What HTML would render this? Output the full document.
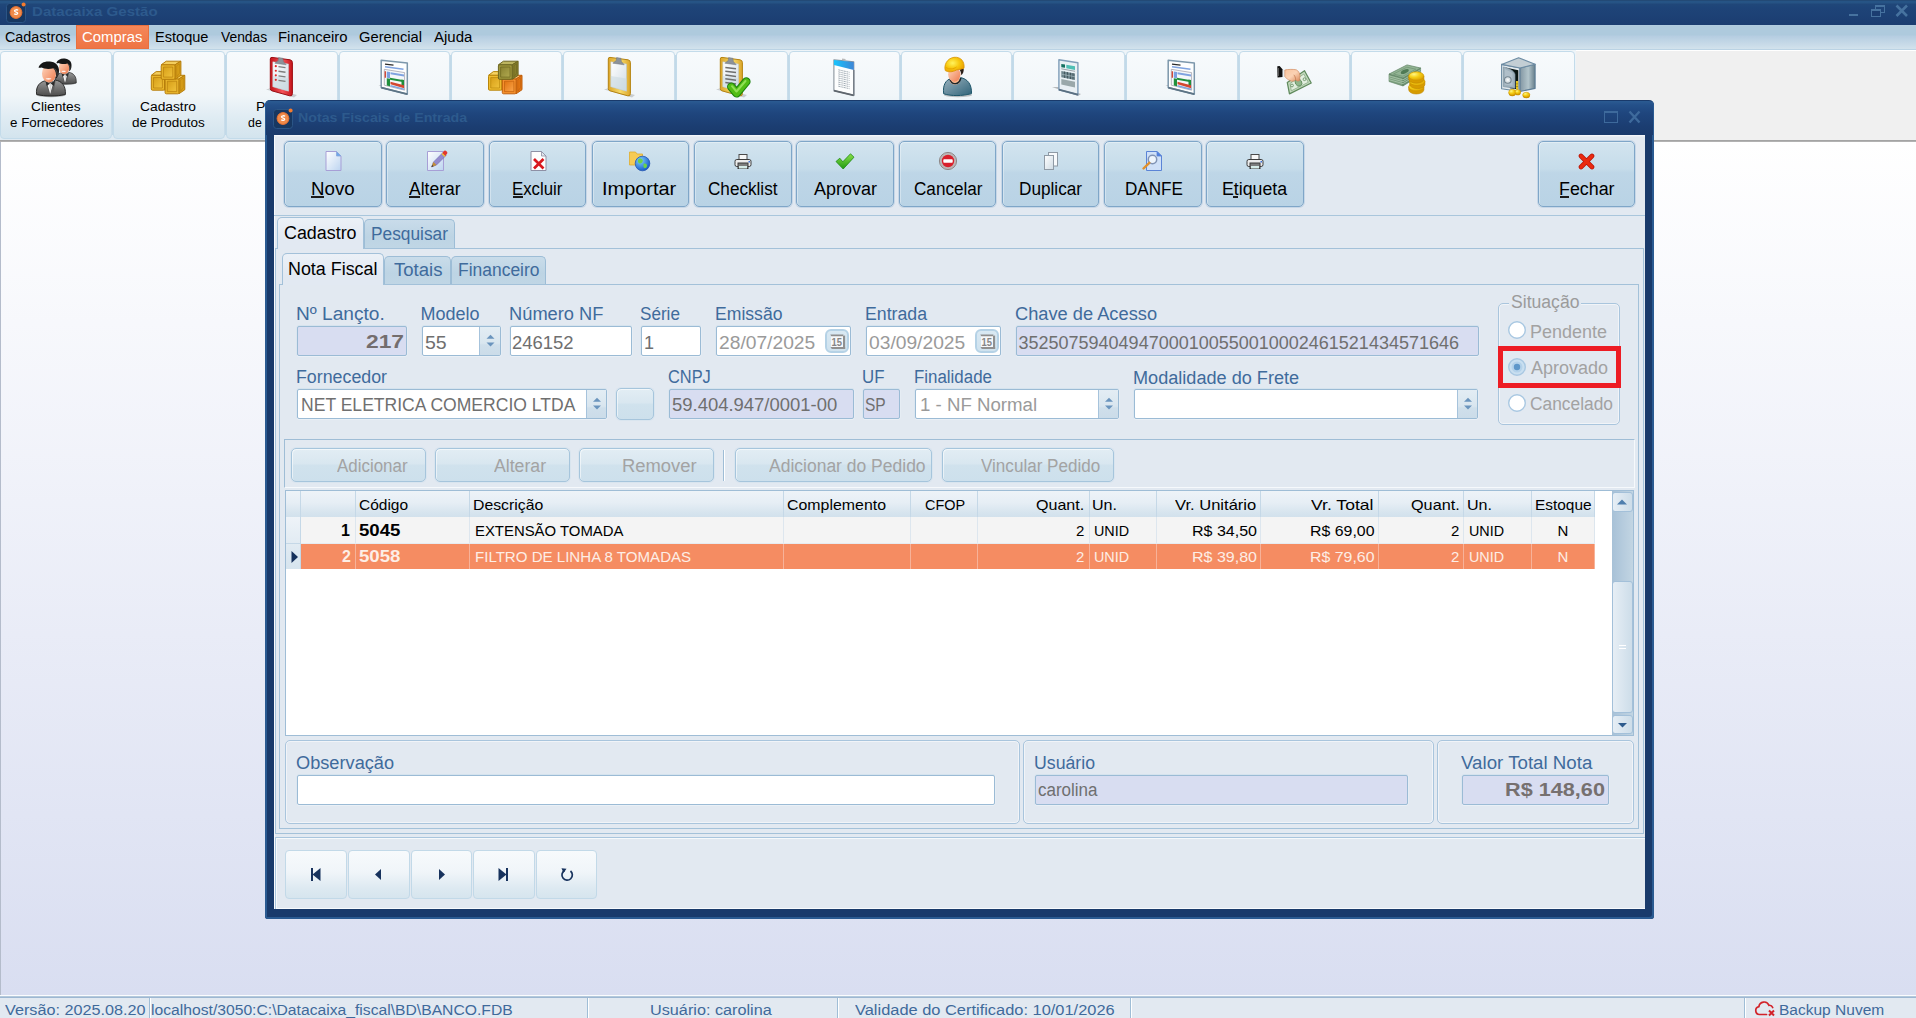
<!DOCTYPE html><html><head><meta charset="utf-8"><title>Datacaixa</title><style>
*{box-sizing:border-box;margin:0;padding:0}
html,body{width:1916px;height:1018px;overflow:hidden;background:#fff;font-family:"Liberation Sans",sans-serif}
div,span.t,svg{position:absolute}
span.t{white-space:pre;line-height:1;transform-origin:0 0}
#root{left:0;top:0;width:1916px;height:1018px;overflow:hidden}
.tb{border:1px solid #c3dbea;border-radius:4px;background:linear-gradient(#f7fafc 0%,#f1f6f9 50%,#e0ecf3 75%,#d3e4ee 100%)}
.bb{border:1px solid #7fa6c8;border-radius:5px;background:linear-gradient(#d2e4ef 0%,#c6dcea 42%,#bed6e7 48%,#b9d3e5 100%);box-shadow:inset 1px 1px 0 rgba(255,255,255,.35),0 0 0 1px rgba(176,201,222,.55)}
.sb{border:1px solid #a6c5dc;border-radius:5px;background:linear-gradient(#e2edf4 0%,#d9e7f0 45%,#d0e2ed 52%,#cde0ec 100%);box-shadow:inset 1px 1px 0 rgba(255,255,255,.55),0 0 0 1px rgba(214,227,238,.7)}
.nb{border:1px solid #c2d9e8;border-radius:4px;background:linear-gradient(#f7fafc 0%,#f0f5f9 45%,#dde9f1 80%,#d6e5ee 100%)}
.fld{border:1px solid #9bbbd5;border-radius:2px;background:#fff;box-shadow:0 -1px 0 #d5e3ee,0 1px 0 #eaf0f6,-1px 0 0 #dbe6f0,1px 0 0 #e6edf4}
.ro{background:#d8ddf1}
.spin{border-left:1px solid #a6c3dc;background:linear-gradient(#e3edf4 0%,#d9e6ef 58%,#cfdfeb 64%,#cbdce9 100%)}
.grp{border:1px solid #a9c5dd;border-radius:5px;box-shadow:inset 0 0 0 1px rgba(255,255,255,.5)}
.hd{background:linear-gradient(#eef3f8 0%,#e6eef5 45%,#d6e4ee 85%,#d2e1ec 100%);border-right:1px solid #c5d8e7}
</style></head><body><div id="root"><div style="left:0px;top:0px;width:1916px;height:25px;background:linear-gradient(#234a76 0%,#234a76 4%,#265485 5%,#265384 11%,#204779 17%,#1e4478 30%,#1d4175 60%,#1b3d70 100%)"></div>
<svg style="left:6px;top:2px" width="21" height="21" viewBox="0 0 21 21"><rect x="0.5" y="1.5" width="19" height="19" rx="3" fill="#173761" stroke="#2b5586" stroke-width="1"/><circle cx="10" cy="10.5" r="5.9" fill="#f08a4a"/><circle cx="10" cy="10.5" r="5.9" fill="none" stroke="#e8702f" stroke-width="1"/><path d="M12 8.3c-.6-.7-3.4-.9-3.5.6-.1 1.500 3.3.8 3.200 2.400-.1 1.400-2.700 1.200-3.500.4" fill="none" stroke="#fff" stroke-width="1.300"/><circle cx="17.6" cy="2.4" r="2" fill="#f47b2e"/></svg>
<span class="t" style="left:31.8px;top:5px;font-size:13px;font-weight:700;transform:scaleX(1.159);color:#2d5a8d;">Datacaixa Gestão</span>
<div style="left:1849px;top:14px;width:9px;height:2px;background:#46729f"></div>
<svg style="left:1869px;top:3px" width="20" height="16" viewBox="0 0 20 16"><g fill="none" stroke="#46729f"><rect x="6.500" y="3" width="9" height="6.500" stroke-width="1"/><path d="M6 3h10" stroke-width="2"/><rect x="2.500" y="7" width="9" height="6.500" fill="#1b3d71" stroke-width="1"/><path d="M2 7h10" stroke-width="2"/></g></svg>
<svg style="left:1894px;top:4px" width="16" height="14" viewBox="0 0 16 14"><path d="M2.500 1.500L13 12M13 1.500L2.500 12" stroke="#46729f" stroke-width="2.600" fill="none"/></svg>
<div style="left:0px;top:25px;width:1916px;height:25px;background:linear-gradient(#b3cde0 0%,#aecadd 5%,#aecadd 40%,#b5cde1 44%,#d2e2ec 95.900%,#bbd3e4 96%,#bbd3e4 100%)"></div>
<div style="left:76px;top:25px;width:73px;height:24px;background:linear-gradient(#f58759,#ee7445);border:1px solid #e8703f"></div>
<span class="t" style="left:5px;top:30px;font-size:14px;transform:scaleX(1.024);color:#000;">Cadastros</span>
<span class="t" style="left:82.4px;top:30px;font-size:14px;transform:scaleX(1.064);color:#fff;">Compras</span>
<span class="t" style="left:154.5px;top:30px;font-size:14px;transform:scaleX(1.04);color:#000;">Estoque</span>
<span class="t" style="left:220.5px;top:30px;font-size:14px;transform:scaleX(0.989);color:#000;">Vendas</span>
<span class="t" style="left:278.4px;top:30px;font-size:14px;transform:scaleX(1.062);color:#000;">Financeiro</span>
<span class="t" style="left:358.9px;top:30px;font-size:14px;transform:scaleX(1.052);color:#000;">Gerencial</span>
<span class="t" style="left:433.5px;top:30px;font-size:14px;transform:scaleX(1.069);color:#000;">Ajuda</span>
<div style="left:0px;top:50px;width:1916px;height:90px;background:#f0f0f0;border-top:1px solid #fff"></div>
<div style="left:0px;top:140px;width:1916px;height:2px;background:linear-gradient(#9d9d9d,#b9b9b9)"></div>
<div style="left:0px;top:50px;width:1576px;height:90px;background:linear-gradient(#eef4f8,#dfeaf2)"></div>
<div class="tb" style="left:0px;top:51px;width:112px;height:88px;"></div>
<div style="left:111px;top:55px;width:3px;height:80px;background:linear-gradient(90deg,#cfe1ed,#c2d9e8 34%,#c2d9e8 66%,#d3e4ee)"></div>
<div class="tb" style="left:113px;top:51px;width:112px;height:88px;"></div>
<div style="left:224px;top:55px;width:3px;height:80px;background:linear-gradient(90deg,#cfe1ed,#c2d9e8 34%,#c2d9e8 66%,#d3e4ee)"></div>
<div class="tb" style="left:226px;top:51px;width:112px;height:88px;"></div>
<div style="left:337px;top:55px;width:3px;height:80px;background:linear-gradient(90deg,#cfe1ed,#c2d9e8 34%,#c2d9e8 66%,#d3e4ee)"></div>
<div class="tb" style="left:339px;top:51px;width:111px;height:88px;"></div>
<div style="left:449px;top:55px;width:3px;height:80px;background:linear-gradient(90deg,#cfe1ed,#c2d9e8 34%,#c2d9e8 66%,#d3e4ee)"></div>
<div class="tb" style="left:451px;top:51px;width:111px;height:88px;"></div>
<div style="left:561px;top:55px;width:3px;height:80px;background:linear-gradient(90deg,#cfe1ed,#c2d9e8 34%,#c2d9e8 66%,#d3e4ee)"></div>
<div class="tb" style="left:563px;top:51px;width:112px;height:88px;"></div>
<div style="left:674px;top:55px;width:3px;height:80px;background:linear-gradient(90deg,#cfe1ed,#c2d9e8 34%,#c2d9e8 66%,#d3e4ee)"></div>
<div class="tb" style="left:676px;top:51px;width:112px;height:88px;"></div>
<div style="left:787px;top:55px;width:3px;height:80px;background:linear-gradient(90deg,#cfe1ed,#c2d9e8 34%,#c2d9e8 66%,#d3e4ee)"></div>
<div class="tb" style="left:789px;top:51px;width:111px;height:88px;"></div>
<div style="left:899px;top:55px;width:3px;height:80px;background:linear-gradient(90deg,#cfe1ed,#c2d9e8 34%,#c2d9e8 66%,#d3e4ee)"></div>
<div class="tb" style="left:901px;top:51px;width:111px;height:88px;"></div>
<div style="left:1011px;top:55px;width:3px;height:80px;background:linear-gradient(90deg,#cfe1ed,#c2d9e8 34%,#c2d9e8 66%,#d3e4ee)"></div>
<div class="tb" style="left:1013px;top:51px;width:112px;height:88px;"></div>
<div style="left:1124px;top:55px;width:3px;height:80px;background:linear-gradient(90deg,#cfe1ed,#c2d9e8 34%,#c2d9e8 66%,#d3e4ee)"></div>
<div class="tb" style="left:1126px;top:51px;width:112px;height:88px;"></div>
<div style="left:1237px;top:55px;width:3px;height:80px;background:linear-gradient(90deg,#cfe1ed,#c2d9e8 34%,#c2d9e8 66%,#d3e4ee)"></div>
<div class="tb" style="left:1239px;top:51px;width:111px;height:88px;"></div>
<div style="left:1349px;top:55px;width:3px;height:80px;background:linear-gradient(90deg,#cfe1ed,#c2d9e8 34%,#c2d9e8 66%,#d3e4ee)"></div>
<div class="tb" style="left:1351px;top:51px;width:111px;height:88px;"></div>
<div style="left:1461px;top:55px;width:3px;height:80px;background:linear-gradient(90deg,#cfe1ed,#c2d9e8 34%,#c2d9e8 66%,#d3e4ee)"></div>
<div class="tb" style="left:1463px;top:51px;width:112px;height:88px;"></div>
<svg width="0" height="0" style="left:0;top:0"><defs><linearGradient id="gGold" x1="0" y1="0" x2="1" y2="1"><stop offset="0" stop-color="#f7d24a"/><stop offset="1" stop-color="#c8900d"/></linearGradient><linearGradient id="gGoldT" x1="0" y1="0" x2="0" y2="1"><stop offset="0" stop-color="#f9dc62"/><stop offset="1" stop-color="#e3ae1f"/></linearGradient><linearGradient id="gSkin" x1="0" y1="0" x2="1" y2="1"><stop offset="0" stop-color="#ffd9c2"/><stop offset="1" stop-color="#ee7a4c"/></linearGradient><linearGradient id="gSuit" x1="0" y1="0" x2="0" y2="1"><stop offset="0" stop-color="#9a9a9a"/><stop offset="1" stop-color="#4c4c4c"/></linearGradient><linearGradient id="gPaper" x1="0" y1="0" x2="1" y2="1"><stop offset="0" stop-color="#ffffff"/><stop offset="1" stop-color="#cfdbe4"/></linearGradient><linearGradient id="gSafe" x1="0" y1="0" x2="1" y2="0"><stop offset="0" stop-color="#b9c7d1"/><stop offset="1" stop-color="#5f7684"/></linearGradient><linearGradient id="gPage" x1="0" y1="0" x2="1" y2="1"><stop offset="0" stop-color="#ffffff"/><stop offset="1" stop-color="#bcd4f0"/></linearGradient><radialGradient id="gGlobe" cx=".35" cy=".3" r=".8"><stop offset="0" stop-color="#7fd0ff"/><stop offset="1" stop-color="#0b4fc4"/></radialGradient><linearGradient id="gGreen" x1="0" y1="0" x2="0" y2="1"><stop offset="0" stop-color="#8be04a"/><stop offset="1" stop-color="#1f9a12"/></linearGradient><linearGradient id="gGoldP" x1="0" y1="0" x2="1" y2="1"><stop offset="0" stop-color="#d79f18"/><stop offset="1" stop-color="#f0c23c"/></linearGradient><linearGradient id="gOrgP" x1="0" y1="0" x2="1" y2="1"><stop offset="0" stop-color="#e0730f"/><stop offset="1" stop-color="#fba54a"/></linearGradient><linearGradient id="gOlvP" x1="0" y1="0" x2="1" y2="1"><stop offset="0" stop-color="#8a8230"/><stop offset="1" stop-color="#b1a94f"/></linearGradient><radialGradient id="gHelm" cx=".4" cy=".4" r=".7"><stop offset="0" stop-color="#fff35e"/><stop offset=".5" stop-color="#f7c90f"/><stop offset="1" stop-color="#e89a00"/></radialGradient><linearGradient id="gTeal" x1="0" y1="0" x2="1" y2="1"><stop offset="0" stop-color="#9db3bf"/><stop offset="1" stop-color="#2f6379"/></linearGradient><linearGradient id="gNote" x1="0" y1="0" x2="1" y2="0"><stop offset="0" stop-color="#17c4fd"/><stop offset="1" stop-color="#3e86d6"/></linearGradient><radialGradient id="gCoin" cx=".35" cy=".3" r=".8"><stop offset="0" stop-color="#fff684"/><stop offset=".45" stop-color="#f5cf16"/><stop offset="1" stop-color="#d99c00"/></radialGradient><linearGradient id="gSafeR" x1="0" y1="0" x2="1" y2="0"><stop offset="0" stop-color="#8397a3"/><stop offset=".55" stop-color="#b3c5cb"/><stop offset="1" stop-color="#667e8b"/></linearGradient><linearGradient id="gHand" x1="0" y1="0" x2="1" y2="1"><stop offset="0" stop-color="#f9c39d"/><stop offset=".5" stop-color="#fbd3b5"/><stop offset="1" stop-color="#d9895c"/></linearGradient></defs></svg>
<svg style="left:34px;top:55px" width="46" height="46" viewBox="0 0 46 46"><g transform="translate(20.5,3.2) scale(0.74)"><ellipse cx="15" cy="34" rx="14.500" ry="2.200" fill="#000" opacity=".28"/><path d="M.6 33.500C-.5 25 4 20.500 10.500 19.500l4 3.500 4.500-4c7 1 11 6 10.400 14.500-9 2-20 2-28.800 0z" fill="url(#gSuit)" stroke="#1f1f1f" stroke-width=".9"/><path d="M9.500 20.500l3.500 12.500 4.500-1 2-12z" fill="#5e5e5e"/><path d="M10.500 20.500l3.700 12.200 3.600-12.700-3.500 2.500z" fill="#fbfbfb"/><path d="M13.400 23.500l.9 8.500 1.500-8.500-1.200-1z" fill="#d8d8d8"/><path d="M9.500 20l1.200 5 3.300-2.500zM19 19.500l-1.200 5.500-3.300-2.800z" fill="#2b2b2b"/><ellipse cx="13" cy="12.500" rx="7" ry="9" fill="url(#gSkin)"/><path d="M9.500 17.500c1.500 1.600 4.500 1.600 6 0-1.500-.7-4.500-.7-6 0z" fill="#fff" opacity=".85"/><path d="M2.500 6.500C4 1.500 10 -.5 15.500.8c6 1.200 8.500 6 7.200 12-.5 2.500-1.700 4-3 5 .8-4 .3-8-2.200-10.500C13 8.500 8 8 5.500 6.500c-1.200.3-2.200.3-3 0z" fill="#161616"/><path d="M17.500 7.500c3 1 4.200 4.500 3.200 8.500" fill="none" stroke="#555" stroke-width="1.200" opacity=".7"/></g><g transform="translate(2,6) scale(1.0)"><ellipse cx="15" cy="34" rx="14.500" ry="2.200" fill="#000" opacity=".28"/><path d="M.6 33.500C-.5 25 4 20.500 10.500 19.500l4 3.500 4.500-4c7 1 11 6 10.400 14.500-9 2-20 2-28.800 0z" fill="url(#gSuit)" stroke="#1f1f1f" stroke-width=".9"/><path d="M9.500 20.500l3.500 12.500 4.500-1 2-12z" fill="#5e5e5e"/><path d="M10.500 20.500l3.700 12.200 3.600-12.700-3.500 2.500z" fill="#fbfbfb"/><path d="M13.400 23.500l.9 8.500 1.500-8.500-1.200-1z" fill="#d8d8d8"/><path d="M9.500 20l1.200 5 3.300-2.500zM19 19.500l-1.200 5.500-3.300-2.800z" fill="#2b2b2b"/><ellipse cx="13" cy="12.500" rx="7" ry="9" fill="url(#gSkin)"/><path d="M9.500 17.500c1.500 1.600 4.500 1.600 6 0-1.500-.7-4.500-.7-6 0z" fill="#fff" opacity=".85"/><path d="M2.500 6.500C4 1.500 10 -.5 15.500.8c6 1.200 8.500 6 7.200 12-.5 2.500-1.700 4-3 5 .8-4 .3-8-2.200-10.500C13 8.500 8 8 5.500 6.500c-1.200.3-2.200.3-3 0z" fill="#161616"/><path d="M17.500 7.500c3 1 4.200 4.500 3.200 8.500" fill="none" stroke="#555" stroke-width="1.200" opacity=".7"/></g></svg>
<svg style="left:148px;top:57px" width="42" height="40" viewBox="0 0 42 40"><g stroke="#b67d0c" stroke-width="1" stroke-linejoin="round"><path d="M3.3 18.32L8.145 14.6H22.3L16.6 18.32Z" fill="#f3cd5c"/><path d="M16.6 18.32L22.3 14.6V29.108L16.6 33.2Z" fill="#d9a01a"/><rect x="3.3" y="18.32" width="13.3" height="14.88" rx="1.2" fill="#e9b62c"/><rect x="5.5" y="20.52" width="8.9" height="10.48" fill="url(#gGoldP)" stroke-width=".7"/><path d="M18.4 19.12L20.7 17.2V27.108L18.4 30.6Z" fill="#d9a01a" stroke-width=".6"/></g><g stroke="#b67d0c" stroke-width="1" stroke-linejoin="round"><path d="M17.1 22L22.1235 18.3H36.8L30.89 22Z" fill="#f3cd5c"/><path d="M30.89 22L36.8 18.3V32.73L30.89 36.8Z" fill="#d9a01a"/><rect x="17.1" y="22" width="13.79" height="14.8" rx="1.2" fill="#e9b62c"/><rect x="19.3" y="24.2" width="9.39" height="10.4" fill="url(#gGoldP)" stroke-width=".7"/><path d="M32.69 22.8L35.2 20.9V30.73L32.69 34.2Z" fill="#d9a01a" stroke-width=".6"/></g><g stroke="#b67d0c" stroke-width="1" stroke-linejoin="round"><path d="M13.2 7.82L18.2235 4.2H32.9L26.99 7.82Z" fill="#f3cd5c"/><path d="M26.99 7.82L32.9 4.2V18.318L26.99 22.3Z" fill="#d9a01a"/><rect x="13.2" y="7.82" width="13.79" height="14.48" rx="1.2" fill="#e9b62c"/><rect x="15.4" y="10.02" width="9.39" height="10.08" fill="url(#gGoldP)" stroke-width=".7"/><path d="M28.79 8.62L31.3 6.8V16.318L28.79 19.7Z" fill="#d9a01a" stroke-width=".6"/></g></svg>
<svg style="left:254px;top:54px" width="56" height="46" viewBox="0 0 56 46"><defs><linearGradient id="gbc4141a" x1="0" y1="0" x2="1" y2="0"><stop offset="0" stop-color="#c4141a"/><stop offset=".55" stop-color="#f4545a"/><stop offset="1" stop-color="#c4141a"/></linearGradient></defs><path d="M12 35.500L40 43.500L43 41L17 34Z" fill="#000" opacity=".16"/><path d="M16.300 5Q16.300 3.200 18 3.400L36 5.800Q38.400 6.200 38.400 8.500V39.500Q38.400 42.500 35.800 41.800L17.900 36.800Q16.300 36.300 16.300 34.600Z" fill="url(#gbc4141a)" stroke="#9c0d12" stroke-width="1"/><path d="M18.800 7.800L34.500 10V37.200L18.800 32.800Z" fill="url(#gPaper)" stroke="#b9c6cf" stroke-width=".5"/><path d="M18.800 22L34.500 24.500V37.200L18.800 32.800Z" fill="#c9d8e0" opacity=".55"/><path d="M24.600 3.600L28.800 4.200L29.400 7.500L32.200 10.800L20.800 9.200L24.200 6.600Z" fill="#8c9299" stroke="#70767d" stroke-width=".5"/><circle cx="21.800" cy="12.2" r="1.100" fill="#e02a2a"/><path d="M24.500 12.7L31.500 13.7" stroke="#7d7d7d" stroke-width="1.300"/><circle cx="21.800" cy="16.75" r="1.100" fill="#e02a2a"/><path d="M24.500 17.25L31.500 18.25" stroke="#7d7d7d" stroke-width="1.300"/><circle cx="21.800" cy="21.3" r="1.100" fill="#e02a2a"/><path d="M24.500 21.8L31.500 22.8" stroke="#7d7d7d" stroke-width="1.300"/><circle cx="21.800" cy="25.85" r="1.100" fill="#e02a2a"/><path d="M24.500 26.35L31.500 27.35" stroke="#7d7d7d" stroke-width="1.300"/></svg>
<svg style="left:366px;top:54px" width="56" height="46" viewBox="0 0 56 46"><path d="M12.500 31L39 39.800L42 38L15.500 31Z" fill="#000" opacity=".3"/><path d="M15.200 6.200L41.300 9V40.200L15.200 33.600Z" fill="#fdfefe" stroke="#7c97ab" stroke-width="1.500" stroke-linejoin="round"/><path d="M15.200 33.600L41.300 40.200" stroke="#5d7485" stroke-width="1.800"/><path d="M19 10.200L27.500 11.200" stroke="#2a2a2a" stroke-width="1.300"/><path d="M19 12.800L37.500 15.300" stroke="#7fa3e0" stroke-width="1.500"/><path d="M18.300 15.300L38.600 18.600V36.200L18.300 31.200Z" fill="#f4f7f9" stroke="#9b9aa5" stroke-width=".7"/><path d="M19.300 17.300v6.500" stroke="#d24a38" stroke-width="1.400"/><path d="M20.800 17.500L24 18V24.200L20.800 23.700Z" fill="#7a9fe0"/><path d="M24.500 18.300L38 20.500V22.500L24.500 20.300Z" fill="#7fa3e0"/><path d="M20.800 24.200L24 24.700V32.200L20.800 31.400Z" fill="#1f8f3c"/><path d="M24 23.800L38 26.300V28.200L24 25.700Z" fill="#1f8f3c"/><path d="M35.500 25.500L38 26V32.500L35.500 32Z" fill="#1f8f3c"/><path d="M24.500 27.800L38 31.300V34.200L24.500 30.300Z" fill="#d4472f"/><path d="M24.500 31L38 34.600V36L24.500 32.500Z" fill="#7fa3e0"/></svg>
<svg style="left:485px;top:57px" width="42" height="40" viewBox="0 0 42 40"><g stroke="#b8860b" stroke-width="1" stroke-linejoin="round"><path d="M3.5 18.32L8.345 14.6H22.5L16.8 18.32Z" fill="#f6d262"/><path d="M16.8 18.32L22.5 14.6V29.108L16.8 33.2Z" fill="#dfa51c"/><rect x="3.5" y="18.32" width="13.3" height="14.88" rx="1.2" fill="#f0bd30"/><rect x="5.7" y="20.52" width="8.9" height="10.48" fill="url(#gGoldP)" stroke-width=".7"/><path d="M18.6 19.12L20.9 17.2V27.108L18.6 30.6Z" fill="#dfa51c" stroke-width=".6"/></g><g stroke="#c05f0c" stroke-width="1" stroke-linejoin="round"><path d="M17.3 22L22.3235 18.3H37L31.09 22Z" fill="#fbb867"/><path d="M31.09 22L37 18.3V32.73L31.09 36.8Z" fill="#e27614"/><rect x="17.3" y="22" width="13.79" height="14.8" rx="1.2" fill="#f5912e"/><rect x="19.5" y="24.2" width="9.39" height="10.4" fill="url(#gOrgP)" stroke-width=".7"/><path d="M32.89 22.8L35.4 20.9V30.73L32.89 34.2Z" fill="#e27614" stroke-width=".6"/></g><g stroke="#6d6620" stroke-width="1" stroke-linejoin="round"><path d="M13.4 7.82L18.4235 4.2H33.1L27.19 7.82Z" fill="#bdb560"/><path d="M27.19 7.82L33.1 4.2V18.318L27.19 22.3Z" fill="#857d2b"/><rect x="13.4" y="7.82" width="13.79" height="14.48" rx="1.2" fill="#9f973c"/><rect x="15.6" y="10.02" width="9.39" height="10.08" fill="url(#gOlvP)" stroke-width=".7"/><path d="M28.99 8.62L31.5 6.8V16.318L28.99 19.7Z" fill="#857d2b" stroke-width=".6"/></g></svg>
<svg style="left:591.6px;top:54px" width="56" height="46" viewBox="0 0 56 46"><defs><linearGradient id="gbdba52a" x1="0" y1="0" x2="1" y2="0"><stop offset="0" stop-color="#dba52a"/><stop offset=".55" stop-color="#f6d968"/><stop offset="1" stop-color="#dba52a"/></linearGradient></defs><path d="M12 35.500L40 43.500L43 41L17 34Z" fill="#000" opacity=".16"/><path d="M16.300 5Q16.300 3.200 18 3.400L36 5.800Q38.400 6.200 38.400 8.500V39.500Q38.400 42.500 35.800 41.800L17.900 36.800Q16.300 36.300 16.300 34.600Z" fill="url(#gbdba52a)" stroke="#b5830f" stroke-width="1"/><path d="M18.800 7.800L34.500 10V37.200L18.800 32.800Z" fill="url(#gPaper)" stroke="#b9c6cf" stroke-width=".5"/><path d="M18.800 22L34.500 24.500V37.200L18.800 32.800Z" fill="#c9d8e0" opacity=".55"/><path d="M24.600 3.600L28.800 4.200L29.400 7.500L32.200 10.800L20.800 9.200L24.200 6.600Z" fill="#8c9299" stroke="#70767d" stroke-width=".5"/></svg>
<svg style="left:704px;top:54px" width="56" height="46" viewBox="0 0 56 46"><defs><linearGradient id="gbdba52a" x1="0" y1="0" x2="1" y2="0"><stop offset="0" stop-color="#dba52a"/><stop offset=".55" stop-color="#f6d968"/><stop offset="1" stop-color="#dba52a"/></linearGradient></defs><path d="M12 35.500L40 43.500L43 41L17 34Z" fill="#000" opacity=".16"/><path d="M16.300 5Q16.300 3.200 18 3.400L36 5.800Q38.400 6.200 38.400 8.500V39.500Q38.400 42.500 35.800 41.800L17.900 36.800Q16.300 36.300 16.300 34.600Z" fill="url(#gbdba52a)" stroke="#b5830f" stroke-width="1"/><path d="M18.800 7.800L34.500 10V37.200L18.800 32.800Z" fill="url(#gPaper)" stroke="#b9c6cf" stroke-width=".5"/><path d="M18.800 22L34.500 24.500V37.200L18.800 32.800Z" fill="#c9d8e0" opacity=".55"/><path d="M24.600 3.600L28.800 4.200L29.400 7.500L32.200 10.800L20.800 9.200L24.200 6.600Z" fill="#8c9299" stroke="#70767d" stroke-width=".5"/><path d="M21.300 13.4L32 14.8" stroke="#6f6f6f" stroke-width="1.500"/><path d="M21.300 17.2L32 18.6" stroke="#6f6f6f" stroke-width="1.500"/><path d="M21.300 21L32 22.4" stroke="#6f6f6f" stroke-width="1.500"/><path d="M21.300 24.8L32 26.2" stroke="#6f6f6f" stroke-width="1.500"/><path d="M21.300 28.6L32 30" stroke="#6f6f6f" stroke-width="1.500"/><path d="M27.300 32.800L32.600 39.300L42.300 27.600" fill="none" stroke="#1f8410" stroke-width="8.600" stroke-linecap="round" stroke-linejoin="round"/><path d="M27.300 32.800L32.600 39.300L42.300 27.600" fill="none" stroke="#52bd14" stroke-width="6.400" stroke-linecap="round" stroke-linejoin="round"/><path d="M28 32.200L32.500 37.500L41.500 27" fill="none" stroke="#a6ec6a" stroke-width="2" stroke-linecap="round" stroke-linejoin="round" opacity=".75"/></svg>
<svg style="left:816px;top:54px" width="56" height="46" viewBox="0 0 56 46"><path d="M17.900 5.900L37.800 7.900V41.400L17.900 36.600Z" fill="#fdfefe" stroke="#8a949e" stroke-width="1.100" stroke-linejoin="round"/><path d="M17.900 36.600L37.800 41.400" stroke="#5f666d" stroke-width="1.800"/><path d="M37.800 16V41.400" stroke="#6f7780" stroke-width="1.300"/><path d="M26 5.200l3.500.5" stroke="#b9b9b9" stroke-width="1.600"/><path d="M17.900 5.900L37.800 7.900V15.900L17.900 10.900Z" fill="url(#gNote)"/><path d="M22.300 15.8L33.500 18.3" stroke="#9aa5ae" stroke-width="1" stroke-dasharray="2.300 .8 1.500 .7" opacity=".9"/><path d="M22.300 17.85L33.500 20.35" stroke="#9aa5ae" stroke-width="1" stroke-dasharray="2.300 .8 1.500 .7" opacity=".9"/><path d="M22.300 19.9L33.500 22.4" stroke="#9aa5ae" stroke-width="1" stroke-dasharray="2.300 .8 1.500 .7" opacity=".9"/><path d="M22.300 21.95L33.500 24.45" stroke="#9aa5ae" stroke-width="1" stroke-dasharray="2.300 .8 1.500 .7" opacity=".9"/><path d="M22.300 24L33.500 26.5" stroke="#9aa5ae" stroke-width="1" stroke-dasharray="2.300 .8 1.500 .7" opacity=".9"/><path d="M22.300 26.05L33.500 28.55" stroke="#9aa5ae" stroke-width="1" stroke-dasharray="2.300 .8 1.500 .7" opacity=".9"/><path d="M22.300 28.1L33.500 30.6" stroke="#9aa5ae" stroke-width="1" stroke-dasharray="2.300 .8 1.500 .7" opacity=".9"/><path d="M22.300 30.15L33.500 32.65" stroke="#9aa5ae" stroke-width="1" stroke-dasharray="2.300 .8 1.500 .7" opacity=".9"/><path d="M22.300 32.2L33.500 34.7" stroke="#9aa5ae" stroke-width="1" stroke-dasharray="2.300 .8 1.500 .7" opacity=".9"/></svg>
<svg style="left:929px;top:54px" width="56" height="46" viewBox="0 0 56 46"><ellipse cx="29" cy="41" rx="14" ry="2.200" fill="#000" opacity=".22"/><path d="M14.700 39.800C13.500 31 17 25.800 21.800 24.600C23 30 29.800 30.200 31.600 23.600C38.500 25 42.800 30 42.500 39.600C33 42.200 22.500 42.200 14.700 39.800Z" fill="url(#gTeal)" stroke="#1d5569" stroke-width="1"/><path d="M21.500 25.500L30.300 24L31 28.500C28 31.500 23.500 31 21.300 28.500Z" fill="#f6b48c"/><path d="M21 25.200C22.500 31.300 30 31.300 31.900 24" fill="none" stroke="#1a262c" stroke-width="1.400"/><ellipse cx="25.300" cy="20.500" rx="6.200" ry="7.200" fill="url(#gSkin)"/><path d="M30.500 15.500L34.700 14.500C35 17.300 34 19.800 32.300 21.300C32.300 19 31.500 17 30.500 15.500Z" fill="#2a1e18"/><path d="M16.300 16.600C14.800 11.500 17.500 4.500 25 3.300C32.300 2.600 35.800 8 35 14.200C32.500 15.200 30 15.500 27.500 16C23.500 18.300 18.800 18.300 16.300 16.600Z" fill="url(#gHelm)" stroke="#d89400" stroke-width=".8"/><path d="M17 13.500C20 15.500 24.500 15.300 27.500 13" fill="none" stroke="#e8a600" stroke-width="1"/></svg>
<svg style="left:1041px;top:54px" width="56" height="46" viewBox="0 0 56 46"><path d="M11 33L37 42L40 40L18.500 33Z" fill="#000" opacity=".25"/><path d="M17.900 5.700L36.900 8.800V40.700L17.900 35.700Z" fill="#e9f0f4" stroke="#7f9db8" stroke-width="1.400" stroke-linejoin="round"/><path d="M17.900 35.700L36.900 40.700" stroke="#5a6f80" stroke-width="1.800"/><path d="M20.300 10L24 10.600V13.800L20.300 13.200Z" fill="#14705f"/><path d="M25.300 10.800L34 12.300V15.900L25.300 14.300Z" fill="#4fbfb4"/><path d="M20.300 14.800L34 17.300" stroke="#9aa4aa" stroke-width="1"/><path d="M20.300 17L34 19.600V26L20.300 23.200Z" fill="#6d848c"/><path d="M23.500 17.600V23.800M26.500 18.200V24.400M29.500 18.800V25M32 19.300V25.500" stroke="#44595f" stroke-width="1"/><path d="M20.300 20.200L34 22.800" stroke="#a9bcc0" stroke-width=".7"/><path d="M20.300 25L34 27.800V33.500L20.300 30.500Z" fill="#9aa8aa"/></svg>
<svg style="left:1153.3px;top:54px" width="56" height="46" viewBox="0 0 56 46"><path d="M12.500 31L39 39.800L42 38L15.500 31Z" fill="#000" opacity=".3"/><path d="M15.200 6.200L41.300 9V40.200L15.200 33.600Z" fill="#fdfefe" stroke="#7c97ab" stroke-width="1.500" stroke-linejoin="round"/><path d="M15.200 33.600L41.300 40.200" stroke="#5d7485" stroke-width="1.800"/><path d="M19 10.200L27.500 11.200" stroke="#2a2a2a" stroke-width="1.300"/><path d="M19 12.800L37.500 15.300" stroke="#7fa3e0" stroke-width="1.500"/><path d="M18.300 15.300L38.600 18.600V36.200L18.300 31.200Z" fill="#f4f7f9" stroke="#9b9aa5" stroke-width=".7"/><path d="M19.300 17.300v6.500" stroke="#d24a38" stroke-width="1.400"/><path d="M20.800 17.500L24 18V24.200L20.800 23.700Z" fill="#7a9fe0"/><path d="M24.500 18.300L38 20.500V22.500L24.500 20.300Z" fill="#7fa3e0"/><path d="M20.800 24.200L24 24.700V32.200L20.800 31.400Z" fill="#1f8f3c"/><path d="M24 23.800L38 26.300V28.200L24 25.700Z" fill="#1f8f3c"/><path d="M35.500 25.500L38 26V32.500L35.500 32Z" fill="#1f8f3c"/><path d="M24.500 27.800L38 31.300V34.200L24.500 30.300Z" fill="#d4472f"/><path d="M24.500 31L38 34.600V36L24.500 32.500Z" fill="#7fa3e0"/></svg>
<svg style="left:1266px;top:54px" width="56" height="46" viewBox="0 0 56 46"><path d="M21.300 28.500L38.500 16.700L45.200 29L23.500 39.800Z" fill="#c6dbc0" stroke="#5f8a5c" stroke-width="1.300" stroke-linejoin="round"/><path d="M24 29.500L37.800 20L42.300 28.300L25.300 36.800Z" fill="#e3efdf" stroke="#7ba077" stroke-width=".7"/><ellipse cx="32.500" cy="28.500" rx="3.200" ry="3.800" transform="rotate(-30 32.500 28.500)" fill="#8fb58a" stroke="#5f8a5c" stroke-width=".8"/><circle cx="26" cy="31.500" r="1.400" fill="#e3efdf" stroke="#5f8a5c" stroke-width=".8"/><circle cx="38.500" cy="25.200" r="1.400" fill="#e3efdf" stroke="#5f8a5c" stroke-width=".8"/><path d="M11.300 12.300L13.600 12L16.700 15.500V23L11.500 23.600Z" fill="#111"/><path d="M12.500 14v8" stroke="#555" stroke-width="1"/><path d="M16.700 15.500L18.800 16V22.600L16.700 23Z" fill="#e6ecf0"/><path d="M18.800 16C22 15.200 27.500 15.200 30.300 15.800C32.500 17 34 19.500 34 21.500L33.600 26.500C32.300 27.600 30.300 27 29.700 25.800C28 27.600 25.300 27.600 24 26.600C21.500 25.500 19.600 23.600 18.800 22.600Z" fill="url(#gHand)" stroke="#c98157" stroke-width=".6"/><path d="M29.700 25.800C29.500 23.500 28.800 21.800 27.800 20.800" fill="none" stroke="#c47a50" stroke-width=".8"/></svg>
<svg style="left:1379px;top:54px" width="56" height="46" viewBox="0 0 56 46"><path d="M10 20.100L24 24V32L10 27.500Z" fill="#7b9e7d" stroke="#5b7f60" stroke-width=".6"/><path d="M24 24L41.600 14V21L24 32Z" fill="#6a8f6f" stroke="#5b7f60" stroke-width=".6"/><path d="M10 21.9L24 25.8L41.600 15.7" fill="none" stroke="#b5ceb4" stroke-width=".7"/><path d="M10 23.8L24 27.7L41.600 17.5" fill="none" stroke="#b5ceb4" stroke-width=".7"/><path d="M10 25.7L24 29.6L41.600 19.3" fill="none" stroke="#b5ceb4" stroke-width=".7"/><path d="M10 20.100L28 10.900L41.600 14L24 24Z" fill="#93b494" stroke="#5b7f60" stroke-width=".7" stroke-linejoin="round"/><path d="M14.500 20L27.800 13.200L36.800 15.200L23.800 22.300Z" fill="none" stroke="#6f9473" stroke-width=".7"/><ellipse cx="25.800" cy="17.500" rx="4.300" ry="1.900" transform="rotate(-24 25.800 17.500)" fill="#4f7a55"/><path d="M29.7 32.8v3a7.600 4.200 0 0 0 15.200 0v-3z" fill="#d79c00" stroke="#c08600" stroke-width=".6"/><ellipse cx="37.3" cy="32.8" rx="7.600" ry="4.200" fill="url(#gCoin)" stroke="#cf9600" stroke-width=".6"/><path d="M30.7 27.4v3a7.600 4.200 0 0 0 15.200 0v-3z" fill="#d79c00" stroke="#c08600" stroke-width=".6"/><ellipse cx="38.3" cy="27.4" rx="7.600" ry="4.200" fill="url(#gCoin)" stroke="#cf9600" stroke-width=".6"/><path d="M29.7 22v3a7.600 4.200 0 0 0 15.200 0v-3z" fill="#d79c00" stroke="#c08600" stroke-width=".6"/><ellipse cx="37.3" cy="22" rx="7.600" ry="4.200" fill="url(#gCoin)" stroke="#cf9600" stroke-width=".6"/></svg>
<svg style="left:1491px;top:54px" width="56" height="46" viewBox="0 0 56 46"><path d="M10.600 10.400L29 14V37.500L10.600 34.800Z" fill="#e3eaee" stroke="#6c8ba3" stroke-width="1.100" stroke-linejoin="round"/><path d="M29 14L44.100 10.200V34.400L29 37.500Z" fill="url(#gSafeR)" stroke="#5d7d96" stroke-width="1.100" stroke-linejoin="round"/><path d="M10.600 10.400L27.600 3.800L44.100 10.200L29 14Z" fill="#c3ced4" stroke="#6c8ba3" stroke-width="1.100" stroke-linejoin="round"/><path d="M14.500 13.600L27.300 16.300V35.400L19 34.200Z" fill="#0a1513"/><path d="M12.300 12.900L14.500 13.600C19.500 15 23.300 17.300 24 20.500V34.200L12.300 32.600Z" fill="#9fb1bc" stroke="#7b90a0" stroke-width=".7"/><path d="M14 15L21.500 19V31.800L14 30.800Z" fill="#b4c3cc" opacity=".8"/><circle cx="16.800" cy="26" r="3.300" fill="#dbe2e6" stroke="#73848f" stroke-width="1.100"/><circle cx="16.800" cy="26" r="1.300" fill="#f4f6f7"/><rect x="25" y="27" width="2.100" height="8.300" fill="#e6c51e"/><path d="M25 29.800h2.100M25 32.500h2.100" stroke="#8a7a10" stroke-width=".6"/><ellipse cx="21.3" cy="39.199999999999996" rx="3.6" ry="3.0" fill="#c98f00"/><ellipse cx="21.3" cy="38.3" rx="3.6" ry="3.0" fill="url(#gCoin)" stroke="#cf9600" stroke-width=".5"/><ellipse cx="26.8" cy="38.9" rx="2.8" ry="2.4" fill="#c98f00"/><ellipse cx="26.8" cy="38" rx="2.8" ry="2.4" fill="url(#gCoin)" stroke="#cf9600" stroke-width=".5"/><ellipse cx="35.3" cy="41.699999999999996" rx="3.6" ry="2.5" fill="#c98f00"/><ellipse cx="35.3" cy="40.8" rx="3.6" ry="2.5" fill="url(#gCoin)" stroke="#cf9600" stroke-width=".5"/></svg>
<span class="t" style="left:30.9px;top:101px;font-size:12px;transform:scaleX(1.143);color:#000;">Clientes</span>
<span class="t" style="left:9.5px;top:117px;font-size:12px;transform:scaleX(1.113);color:#000;">e Fornecedores</span>
<span class="t" style="left:139.9px;top:101px;font-size:12px;transform:scaleX(1.149);color:#000;">Cadastro</span>
<span class="t" style="left:132px;top:117px;font-size:12px;transform:scaleX(1.125);color:#000;">de Produtos</span>
<span class="t" style="left:255.8px;top:101px;font-size:12px;transform:scaleX(1.167);color:#000;">Pedidos</span>
<span class="t" style="left:248px;top:117px;font-size:12px;transform:scaleX(1.031);color:#000;">de Compras</span>
<div style="left:0px;top:142px;width:1916px;height:853px;background:linear-gradient(#ffffff,#d9def1)"></div>
<div style="left:0px;top:142px;width:1px;height:854px;background:#b4bccb"></div>
<div style="left:0px;top:995px;width:1916px;height:23px;background:#e2e9f1;border-top:1px solid #fbfcfe"></div>
<div style="left:0px;top:996px;width:1916px;height:1px;background:#b5cadc"></div>
<div style="left:0px;top:997px;width:1916px;height:1px;background:#9db7d2"></div>
<div style="left:149px;top:998px;width:2px;height:20px;background:linear-gradient(90deg,#9fbdd6 50%,#fff 50%)"></div>
<div style="left:587px;top:998px;width:2px;height:20px;background:linear-gradient(90deg,#9fbdd6 50%,#fff 50%)"></div>
<div style="left:837px;top:998px;width:2px;height:20px;background:linear-gradient(90deg,#9fbdd6 50%,#fff 50%)"></div>
<div style="left:1130px;top:998px;width:2px;height:20px;background:linear-gradient(90deg,#9fbdd6 50%,#fff 50%)"></div>
<div style="left:1744px;top:998px;width:2px;height:20px;background:linear-gradient(90deg,#9fbdd6 50%,#fff 50%)"></div>
<span class="t" style="left:4.5px;top:1003px;font-size:14px;transform:scaleX(1.157);color:#3f6a9b;">Versão: 2025.08.20</span>
<span class="t" style="left:150.9px;top:1003px;font-size:14px;transform:scaleX(1.12);color:#3f6a9b;">localhost/3050:C:\Datacaixa_fiscal\BD\BANCO.FDB</span>
<span class="t" style="left:650.3px;top:1003px;font-size:14px;transform:scaleX(1.159);color:#3f6a9b;">Usuário: carolina</span>
<span class="t" style="left:855px;top:1003px;font-size:14px;transform:scaleX(1.172);color:#3f6a9b;">Validade do Certificado: 10/01/2026</span>
<span class="t" style="left:1779.4px;top:1003px;font-size:14px;transform:scaleX(1.108);color:#3f6a9b;">Backup Nuvem</span>
<svg style="left:1754px;top:1000px" width="22" height="17" viewBox="0 0 22 17"><path d="M12.500 14.500H5.500a4 4 0 0 1-.6-7.900 5.200 5.200 0 0 1 10-1.300 3.600 3.600 0 0 1 3.800 2.200" fill="none" stroke="#d2232a" stroke-width="1.700" stroke-linecap="round"/><path d="M15 10.500l5 5M20 10.500l-5 5" stroke="#d2232a" stroke-width="2"/></svg>
<div style="left:265px;top:100px;width:1389px;height:819px;background:#193a6b;border-radius:5px 5px 3px 3px;box-shadow:inset 2px 0 0 #2a5a91, inset -2px -2px 0 #2a5a91"></div>
<div style="left:266px;top:101px;width:1387px;height:34px;background:linear-gradient(#2b5b92 0%,#245089 12%,#1f467e 35%,#1b3d71 75%,#1a3a6c 100%);border-radius:4px 4px 0 0"></div>
<svg style="left:273px;top:108px" width="21" height="21" viewBox="0 0 21 21"><rect x="0.5" y="1.5" width="19" height="19" rx="3" fill="#173761" stroke="#2b5586" stroke-width="1"/><circle cx="10" cy="10.5" r="5.9" fill="#f08a4a"/><circle cx="10" cy="10.5" r="5.9" fill="none" stroke="#e8702f" stroke-width="1"/><path d="M12 8.3c-.6-.7-3.4-.9-3.5.6-.1 1.500 3.3.8 3.200 2.400-.1 1.400-2.700 1.200-3.500.4" fill="none" stroke="#fff" stroke-width="1.300"/><circle cx="17.6" cy="2.4" r="2" fill="#f47b2e"/></svg>
<span class="t" style="left:298.4px;top:111px;font-size:13px;font-weight:700;transform:scaleX(1.094);color:#2d5a8d;">Notas Fiscais de Entrada</span>
<svg style="left:1603px;top:110px" width="16" height="14" viewBox="0 0 16 14"><rect x="1.500" y="2" width="13" height="10.500" fill="none" stroke="#3e6a9c" stroke-width="1"/><path d="M1 2h14" stroke="#3e6a9c" stroke-width="2"/></svg>
<svg style="left:1627px;top:110px" width="15" height="14" viewBox="0 0 15 14"><path d="M2.500 1.500L12.500 12.500M12.500 1.500L2.500 12.500" stroke="#3e6a9c" stroke-width="2.400" fill="none"/></svg>
<div style="left:274px;top:135px;width:1371px;height:774px;background:#e2e9f1;box-shadow:inset 1px -1px 0 #f8fafd"></div>
<div style="left:274px;top:135px;width:1371px;height:1px;background:#f3f6fa"></div>
<div style="left:274px;top:136px;width:1371px;height:1px;background:#e9eef5"></div>
<div class="bb" style="left:284px;top:141px;width:98px;height:66px;"></div>
<span class="t" style="left:310.5px;top:180px;font-size:18px;transform:scaleX(1.038);color:#000;">Novo</span>
<svg style="left:325px;top:151px" width="17" height="20" viewBox="0 0 17 20"><path d="M1 .5H11.500L16 5V19.500H1Z" fill="url(#gPage)" stroke="#a79fd6" stroke-width="1"/><path d="M11.500 .5V5H16Z" fill="#6da7ea" stroke="#8aa6dc" stroke-width=".8"/></svg>
<div class="bb" style="left:386px;top:141px;width:98px;height:66px;"></div>
<span class="t" style="left:409px;top:180px;font-size:18px;transform:scaleX(0.972);color:#000;">Alterar</span>
<svg style="left:427px;top:150px" width="21" height="21" viewBox="0 0 21 21"><path d="M.5 1.500H16.500V20.500H.5Z" fill="url(#gPage)" stroke="#a79fd6" stroke-width="1"/><path d="M4.500 17L6.500 12L16 2.500L19 5.500L9.500 15Z" fill="#948bcd" stroke="#6f66ad" stroke-width=".6"/><path d="M4.500 17L6.500 12L9.500 15Z" fill="#c48f35"/><path d="M4.500 17l.8-2 1.200 1.200z" fill="#333"/><path d="M15.300 3.200l1.200-1.700a2.100 2.100 0 0 1 3.300 2.600L18.300 6z" fill="#e3362c"/><path d="M15 3.500l3 3" stroke="#f2c230" stroke-width="1.300"/></svg>
<div class="bb" style="left:489px;top:141px;width:97px;height:66px;"></div>
<span class="t" style="left:512.1px;top:180px;font-size:18px;transform:scaleX(0.934);color:#000;">Excluir</span>
<svg style="left:530px;top:151px" width="17" height="20" viewBox="0 0 17 20"><path d="M1 .5H11.500L16 5V19.500H1Z" fill="#fdfdfd" stroke="#8e90a5" stroke-width="1"/><path d="M11.500 .5V5H16Z" fill="#e3e8ef" stroke="#8e90a5" stroke-width=".8"/><path d="M4 8L13.500 17.500M13.500 8L4 17.500" stroke="#d8171d" stroke-width="2.700"/></svg>
<div class="bb" style="left:592px;top:141px;width:97px;height:66px;"></div>
<span class="t" style="left:601.8px;top:180px;font-size:18px;transform:scaleX(1.108);color:#000;">Importar</span>
<svg style="left:629px;top:151px" width="22" height="21" viewBox="0 0 22 21"><path d="M.5 1h6l1.500 2h5.500v11H.5z" fill="#f6cb55" stroke="#e0ac2c" stroke-width=".8"/><circle cx="13.500" cy="12.500" r="7.300" fill="url(#gGlobe)" stroke="#2456b0" stroke-width=".8"/><path d="M9 9c1.500-2.500 3.500-1.500 4.500-.3s-.5 3.300-2 3.800-3-1-2.500-3.500zM14.500 13c1.500-1 4 0 3.500 2.200s-3 2.800-3.500.6z" fill="#6bd14a"/></svg>
<div class="bb" style="left:694px;top:141px;width:98px;height:66px;"></div>
<span class="t" style="left:708px;top:180px;font-size:18px;transform:scaleX(0.951);color:#000;">Checklist</span>
<svg style="left:734px;top:153px" width="18" height="17" viewBox="0 0 18 17"><rect x="5" y="1.500" width="8" height="6" fill="#f7f7f7" stroke="#4a4a4a" stroke-width="1"/><rect x="1" y="6.500" width="16" height="7" rx="1.800" fill="#ececec" stroke="#3c3c3c" stroke-width="1"/><rect x="4" y="10" width="10" height="5.500" fill="#7d7d7d" stroke="#3c3c3c" stroke-width="1"/><rect x="5" y="13" width="8" height="2.500" fill="#d5ebe7"/><rect x="14.500" y="8" width="1.500" height="1.500" fill="#3b6fd8"/></svg>
<div class="bb" style="left:796px;top:141px;width:98px;height:66px;"></div>
<span class="t" style="left:814px;top:180px;font-size:18px;color:#000;">Aprovar</span>
<svg style="left:835px;top:153px" width="20" height="17" viewBox="0 0 20 17"><path d="M1 8.500L4.800 5.200L7.800 8.800L15.500 .8L19 4.200L8.200 16Z" fill="url(#gGreen)" stroke="#1d8a10" stroke-width=".8"/></svg>
<div class="bb" style="left:899px;top:141px;width:97px;height:66px;"></div>
<span class="t" style="left:913.5px;top:180px;font-size:18px;transform:scaleX(0.951);color:#000;">Cancelar</span>
<svg style="left:938px;top:151px" width="20" height="20" viewBox="0 0 20 20"><circle cx="10" cy="10" r="8.600" fill="#bdb6b6" stroke="#8e8888" stroke-width="1"/><circle cx="10" cy="10" r="6.200" fill="#d8202c"/><rect x="5.300" y="8.300" width="9.400" height="3.400" rx=".8" fill="#fff"/></svg>
<div class="bb" style="left:1002px;top:141px;width:97px;height:66px;"></div>
<span class="t" style="left:1018.5px;top:180px;font-size:18px;transform:scaleX(0.954);color:#000;">Duplicar</span>
<svg style="left:1043px;top:152px" width="17" height="19" viewBox="0 0 17 19"><rect x="5.500" y=".5" width="9" height="13.500" fill="#f8fafc" stroke="#8f9aa5" stroke-width="1"/><rect x="1.500" y="3.500" width="9" height="14" fill="url(#gPaper)" stroke="#8f9aa5" stroke-width="1"/></svg>
<div class="bb" style="left:1104px;top:141px;width:98px;height:66px;"></div>
<span class="t" style="left:1124.6px;top:180px;font-size:18px;transform:scaleX(0.949);color:#000;">DANFE</span>
<svg style="left:1141px;top:151px" width="22" height="21" viewBox="0 0 22 21"><path d="M5.500 .5H16L20.500 5V19.500H5.500Z" fill="#cfe0f8" stroke="#5b84d6" stroke-width="1"/><path d="M16 .5V5H20.500Z" fill="#4d7fe0" stroke="#5b84d6" stroke-width=".8"/><circle cx="11.500" cy="8.500" r="4.200" fill="#eef5fd" stroke="#8093b5" stroke-width="1.500"/><path d="M8.300 11.800L2.500 17.500" stroke="#e0902c" stroke-width="2.400" stroke-linecap="round"/></svg>
<div class="bb" style="left:1206px;top:141px;width:98px;height:66px;"></div>
<span class="t" style="left:1222px;top:180px;font-size:18px;transform:scaleX(0.985);color:#000;">Etiqueta</span>
<svg style="left:1246px;top:153px" width="18" height="17" viewBox="0 0 18 17"><rect x="5" y="1.500" width="8" height="6" fill="#f7f7f7" stroke="#4a4a4a" stroke-width="1"/><rect x="1" y="6.500" width="16" height="7" rx="1.800" fill="#ececec" stroke="#3c3c3c" stroke-width="1"/><rect x="4" y="10" width="10" height="5.500" fill="#7d7d7d" stroke="#3c3c3c" stroke-width="1"/><rect x="5" y="13" width="8" height="2.500" fill="#d5ebe7"/><rect x="14.500" y="8" width="1.500" height="1.500" fill="#3b6fd8"/></svg>
<div class="bb" style="left:1538px;top:141px;width:97px;height:66px;"></div>
<span class="t" style="left:1558.5px;top:180px;font-size:18px;transform:scaleX(0.991);color:#000;">Fechar</span>
<svg style="left:1578px;top:153px" width="17" height="17" viewBox="0 0 17 17"><path d="M3 3L14 14M14 3L3 14" stroke="#b51408" stroke-width="4.600" stroke-linecap="round"/><path d="M3 3L14 14M14 3L3 14" stroke="#ea2a10" stroke-width="3.200" stroke-linecap="round"/></svg>
<div style="left:311px;top:196px;width:13px;height:2px;background:#1a1a1a"></div>
<div style="left:409px;top:196px;width:11px;height:2px;background:#1a1a1a"></div>
<div style="left:513px;top:196px;width:10px;height:2px;background:#1a1a1a"></div>
<div style="left:1232.5px;top:196px;width:5.5px;height:2px;background:#1a1a1a"></div>
<div style="left:1559.5px;top:196px;width:9.5px;height:2px;background:#1a1a1a"></div>
<div style="left:274px;top:215px;width:1371px;height:1px;background:#a9c6dc"></div>
<div style="left:275px;top:248px;width:1369px;height:586px;border:1px solid #a3c1d9;background:#e2e9f1"></div>
<div style="left:277px;top:217px;width:87px;height:32px;border:1px solid #a3c1d9;border-bottom:none;border-radius:5px 5px 0 0;background:linear-gradient(#ecf1f7,#e2e9f2 70%)"></div>
<div style="left:364px;top:219px;width:91px;height:29px;border:1px solid #9dbdd6;border-bottom:none;border-radius:5px 5px 0 0;background:linear-gradient(#c9dcea,#bdd4e4 60%,#c0d6e5)"></div>
<span class="t" style="left:283.5px;top:224px;font-size:18px;transform:scaleX(0.993);color:#000;">Cadastro</span>
<span class="t" style="left:370.5px;top:225px;font-size:18px;transform:scaleX(0.962);color:#3f6b9c;">Pesquisar</span>
<div style="left:279px;top:284px;width:1360px;height:545px;border:1px solid #a3c1d9;background:#e2e9f1"></div>
<div style="left:282px;top:253px;width:102px;height:32px;border:1px solid #a3c1d9;border-bottom:none;border-radius:5px 5px 0 0;background:linear-gradient(#ecf1f7,#e2e9f2 70%)"></div>
<div style="left:384px;top:256px;width:67px;height:28px;border:1px solid #9dbdd6;border-bottom:none;border-radius:5px 5px 0 0;background:linear-gradient(#c9dcea,#bdd4e4 60%,#c0d6e5)"></div>
<div style="left:451px;top:256px;width:95px;height:28px;border:1px solid #9dbdd6;border-bottom:none;border-radius:5px 5px 0 0;background:linear-gradient(#c9dcea,#bdd4e4 60%,#c0d6e5)"></div>
<span class="t" style="left:288px;top:260px;font-size:18px;transform:scaleX(0.994);color:#000;">Nota Fiscal</span>
<span class="t" style="left:393.5px;top:261px;font-size:18px;transform:scaleX(1.032);color:#3f6b9c;">Totais</span>
<span class="t" style="left:458px;top:261px;font-size:18px;transform:scaleX(0.97);color:#3f6b9c;">Financeiro</span>
<span class="t" style="left:295.9px;top:305px;font-size:18px;transform:scaleX(1.062);color:#3f6b9c;">Nº Lançto.</span>
<div class="fld ro" style="left:297px;top:326px;width:110px;height:30px;"></div>
<span class="t" style="left:365.8px;top:332px;font-size:19px;font-weight:700;transform:scaleX(1.2);color:#736d6e;">217</span>
<span class="t" style="left:420.5px;top:305px;font-size:18px;color:#3f6b9c;">Modelo</span>
<div class="fld" style="left:422px;top:326px;width:79px;height:30px;"></div>
<div class="spin" style="left:479px;top:327px;width:21px;height:28px;"><svg style="left:0;top:0" width="21" height="28"><path d="M6.5 11.8L10.5 7.8L14.5 11.8Z M6.5 15.5L10.5 19.5L14.5 15.5Z" fill="#6a94bd"/></svg></div>
<span class="t" style="left:425.4px;top:334px;font-size:18px;transform:scaleX(1.083);color:#6f6f6f;">55</span>
<span class="t" style="left:508.5px;top:305px;font-size:18px;transform:scaleX(1.016);color:#3f6b9c;">Número NF</span>
<div class="fld" style="left:510px;top:326px;width:122px;height:30px;"></div>
<span class="t" style="left:512px;top:334px;font-size:18px;transform:scaleX(1.026);color:#6f6f6f;">246152</span>
<span class="t" style="left:639.6px;top:305px;font-size:18px;transform:scaleX(0.95);color:#3f6b9c;">Série</span>
<div class="fld" style="left:641px;top:326px;width:60px;height:30px;"></div>
<span class="t" style="left:644px;top:334px;font-size:18px;color:#6f6f6f;">1</span>
<span class="t" style="left:714.5px;top:305px;font-size:18px;transform:scaleX(0.978);color:#3f6b9c;">Emissão</span>
<div class="fld" style="left:716px;top:326px;width:135px;height:30px;"></div>
<span class="t" style="left:719.4px;top:334px;font-size:18px;transform:scaleX(1.068);color:#9a9a9a;">28/07/2025</span>
<div style="left:825px;top:329px;width:24px;height:24px;border:2px solid #b5d2e6;border-radius:6px;background:linear-gradient(#d9e9f3,#cfe2ee);"><svg style="left:3px;top:3px" width="16" height="16" viewBox="0 0 16 16"><rect x="1" y="2" width="12.500" height="11" fill="#f6f8fa"/><path d="M.3 .4H13.500L12.800 2.200H1.300Z" fill="#8e8e8e"/><rect x="13" y="1.600" width="2.100" height="13.400" fill="#909090"/><path d="M.5 12.900H15.100V15H1.800Z" fill="#909090"/><text x="6.800" y="11.700" font-family="Liberation Sans" font-size="10.500" font-weight="700" text-anchor="middle" fill="#858585" textLength="10.500" lengthAdjust="spacingAndGlyphs">15</text></svg></div>
<span class="t" style="left:865px;top:305px;font-size:18px;transform:scaleX(0.984);color:#3f6b9c;">Entrada</span>
<div class="fld" style="left:866px;top:326px;width:135px;height:30px;"></div>
<span class="t" style="left:869.4px;top:334px;font-size:18px;transform:scaleX(1.068);color:#9a9a9a;">03/09/2025</span>
<div style="left:975px;top:329px;width:24px;height:24px;border:2px solid #b5d2e6;border-radius:6px;background:linear-gradient(#d9e9f3,#cfe2ee);"><svg style="left:3px;top:3px" width="16" height="16" viewBox="0 0 16 16"><rect x="1" y="2" width="12.500" height="11" fill="#f6f8fa"/><path d="M.3 .4H13.500L12.800 2.200H1.300Z" fill="#8e8e8e"/><rect x="13" y="1.600" width="2.100" height="13.400" fill="#909090"/><path d="M.5 12.900H15.100V15H1.800Z" fill="#909090"/><text x="6.800" y="11.700" font-family="Liberation Sans" font-size="10.500" font-weight="700" text-anchor="middle" fill="#858585" textLength="10.500" lengthAdjust="spacingAndGlyphs">15</text></svg></div>
<span class="t" style="left:1015px;top:305px;font-size:18px;transform:scaleX(1.014);color:#3f6b9c;">Chave de Acesso</span>
<div class="fld ro" style="left:1016px;top:326px;width:463px;height:30px;"></div>
<span class="t" style="left:1018.5px;top:334px;font-size:18px;color:#6f6f6f;">35250759404947000100550010002461521434571646</span>
<span class="t" style="left:296px;top:368px;font-size:18px;transform:scaleX(0.989);color:#3f6b9c;">Fornecedor</span>
<div class="fld" style="left:297px;top:389px;width:310px;height:30px;"></div>
<div class="spin" style="left:586px;top:390px;width:20px;height:28px;"><svg style="left:0;top:0" width="20" height="28"><path d="M6.0 11.8L10.0 7.8L14.0 11.8Z M6.0 15.5L10.0 19.5L14.0 15.5Z" fill="#6a94bd"/></svg></div>
<span class="t" style="left:301px;top:396px;font-size:18px;transform:scaleX(0.975);color:#6f6f6f;">NET ELETRICA COMERCIO LTDA</span>
<div class="sb" style="left:616px;top:388px;width:38px;height:32px;"></div>
<span class="t" style="left:667.6px;top:368px;font-size:18px;transform:scaleX(0.911);color:#3f6b9c;">CNPJ</span>
<div class="fld ro" style="left:669px;top:389px;width:185px;height:30px;"></div>
<span class="t" style="left:671.5px;top:396px;font-size:18px;transform:scaleX(1.025);color:#6f6f6f;">59.404.947/0001-00</span>
<span class="t" style="left:861.6px;top:368px;font-size:18px;transform:scaleX(0.935);color:#3f6b9c;">UF</span>
<div class="fld ro" style="left:863px;top:389px;width:37px;height:30px;"></div>
<span class="t" style="left:865.1px;top:396px;font-size:18px;transform:scaleX(0.864);color:#6f6f6f;">SP</span>
<span class="t" style="left:914.1px;top:368px;font-size:18px;transform:scaleX(0.938);color:#3f6b9c;">Finalidade</span>
<div class="fld" style="left:915px;top:389px;width:204px;height:30px;"></div>
<div class="spin" style="left:1098px;top:390px;width:20px;height:28px;"><svg style="left:0;top:0" width="20" height="28"><path d="M6.0 11.8L10.0 7.8L14.0 11.8Z M6.0 15.5L10.0 19.5L14.0 15.5Z" fill="#6a94bd"/></svg></div>
<span class="t" style="left:920px;top:396px;font-size:18px;transform:scaleX(1.036);color:#9a9a9a;">1 - NF Normal</span>
<span class="t" style="left:1132.5px;top:369px;font-size:18px;transform:scaleX(1.006);color:#3f6b9c;">Modalidade do Frete</span>
<div class="fld" style="left:1134px;top:389px;width:344px;height:30px;"></div>
<div class="spin" style="left:1457px;top:390px;width:20px;height:28px;"><svg style="left:0;top:0" width="20" height="28"><path d="M6.0 11.8L10.0 7.8L14.0 11.8Z M6.0 15.5L10.0 19.5L14.0 15.5Z" fill="#6a94bd"/></svg></div>
<div class="grp" style="left:1498px;top:303px;width:122px;height:122px;"></div>
<div style="left:1509px;top:298px;width:72px;height:12px;background:#e2e9f1"></div>
<span class="t" style="left:1511px;top:293px;font-size:18px;transform:scaleX(0.978);color:#9b9b9b;">Situação</span>
<svg style="left:1506.5px;top:319.5px" width="20" height="20"><circle cx="10" cy="10" r="8.300" fill="#fff" stroke="#a9c8e2" stroke-width="1.400"/></svg>
<span class="t" style="left:1530px;top:323px;font-size:18px;color:#a2a2a2;">Pendente</span>
<svg style="left:1506.5px;top:356.5px" width="20" height="20"><circle cx="10" cy="10" r="8.300" fill="#c9dff0" stroke="#a9c8e2" stroke-width="1.400"/><circle cx="10" cy="10" r="5.500" fill="#b4d2ea"/><circle cx="10" cy="10" r="3.200" fill="#5f97c9"/></svg>
<span class="t" style="left:1531px;top:359px;font-size:18px;color:#a2a2a2;">Aprovado</span>
<svg style="left:1506.5px;top:392.5px" width="20" height="20"><circle cx="10" cy="10" r="8.300" fill="#fff" stroke="#a9c8e2" stroke-width="1.400"/></svg>
<span class="t" style="left:1530px;top:395px;font-size:18px;transform:scaleX(0.964);color:#a2a2a2;">Cancelado</span>
<div style="left:1498px;top:346px;width:123px;height:42px;border:5px solid #ed1c24"></div>
<div style="left:284px;top:439px;width:1351px;height:49px;border:1px solid #9fbdd6;border-right-color:#f6f9fc;border-bottom-color:#f6f9fc"></div>
<div class="sb" style="left:291px;top:448px;width:135px;height:34px;"></div>
<span class="t" style="left:336.5px;top:457px;font-size:18px;transform:scaleX(0.94);color:#a3a3a3;">Adicionar</span>
<div class="sb" style="left:435px;top:448px;width:135px;height:34px;"></div>
<span class="t" style="left:494px;top:457px;font-size:18px;transform:scaleX(0.981);color:#a3a3a3;">Alterar</span>
<div class="sb" style="left:579px;top:448px;width:135px;height:34px;"></div>
<span class="t" style="left:621.5px;top:457px;font-size:18px;transform:scaleX(1.021);color:#a3a3a3;">Remover</span>
<div class="sb" style="left:735px;top:448px;width:197px;height:34px;"></div>
<span class="t" style="left:768.5px;top:457px;font-size:18px;transform:scaleX(0.972);color:#a3a3a3;">Adicionar do Pedido</span>
<div class="sb" style="left:942px;top:448px;width:172px;height:34px;"></div>
<span class="t" style="left:981px;top:457px;font-size:18px;transform:scaleX(0.948);color:#a3a3a3;">Vincular Pedido</span>
<div style="left:723px;top:450px;width:1px;height:31px;background:#9fbdd6"></div>
<div style="left:724px;top:450px;width:1px;height:31px;background:#fff"></div>
<div style="left:285px;top:490px;width:1349px;height:246px;border:1px solid #9fbdd6;background:#fff"></div>
<div class="hd" style="left:286px;top:491px;width:15px;height:26px;"></div>
<div class="hd" style="left:301px;top:491px;width:55px;height:26px;"></div>
<div class="hd" style="left:356px;top:491px;width:114px;height:26px;"></div>
<div class="hd" style="left:470px;top:491px;width:314px;height:26px;"></div>
<div class="hd" style="left:784px;top:491px;width:127px;height:26px;"></div>
<div class="hd" style="left:911px;top:491px;width:67px;height:26px;"></div>
<div class="hd" style="left:978px;top:491px;width:112px;height:26px;"></div>
<div class="hd" style="left:1090px;top:491px;width:67px;height:26px;"></div>
<div class="hd" style="left:1157px;top:491px;width:104px;height:26px;"></div>
<div class="hd" style="left:1261px;top:491px;width:118px;height:26px;"></div>
<div class="hd" style="left:1379px;top:491px;width:85px;height:26px;"></div>
<div class="hd" style="left:1464px;top:491px;width:68px;height:26px;"></div>
<div class="hd" style="left:1532px;top:491px;width:63px;height:26px;"></div>
<div style="left:286px;top:517px;width:15px;height:52px;background:linear-gradient(#eef3f8,#d6e4ee);border-right:1px solid #c5d8e7"></div>
<div style="left:301px;top:517px;width:1294px;height:27px;background:#f4f4f4"></div>
<div style="left:301px;top:544px;width:1294px;height:25px;background:#f58c62"></div>
<div style="left:355px;top:517px;width:1px;height:27px;background:#dde6ee"></div>
<div style="left:355px;top:544px;width:1px;height:25px;background:#f7b299"></div>
<div style="left:469px;top:517px;width:1px;height:27px;background:#dde6ee"></div>
<div style="left:469px;top:544px;width:1px;height:25px;background:#f7b299"></div>
<div style="left:783px;top:517px;width:1px;height:27px;background:#dde6ee"></div>
<div style="left:783px;top:544px;width:1px;height:25px;background:#f7b299"></div>
<div style="left:910px;top:517px;width:1px;height:27px;background:#dde6ee"></div>
<div style="left:910px;top:544px;width:1px;height:25px;background:#f7b299"></div>
<div style="left:977px;top:517px;width:1px;height:27px;background:#dde6ee"></div>
<div style="left:977px;top:544px;width:1px;height:25px;background:#f7b299"></div>
<div style="left:1089px;top:517px;width:1px;height:27px;background:#dde6ee"></div>
<div style="left:1089px;top:544px;width:1px;height:25px;background:#f7b299"></div>
<div style="left:1156px;top:517px;width:1px;height:27px;background:#dde6ee"></div>
<div style="left:1156px;top:544px;width:1px;height:25px;background:#f7b299"></div>
<div style="left:1260px;top:517px;width:1px;height:27px;background:#dde6ee"></div>
<div style="left:1260px;top:544px;width:1px;height:25px;background:#f7b299"></div>
<div style="left:1378px;top:517px;width:1px;height:27px;background:#dde6ee"></div>
<div style="left:1378px;top:544px;width:1px;height:25px;background:#f7b299"></div>
<div style="left:1463px;top:517px;width:1px;height:27px;background:#dde6ee"></div>
<div style="left:1463px;top:544px;width:1px;height:25px;background:#f7b299"></div>
<div style="left:1531px;top:517px;width:1px;height:27px;background:#dde6ee"></div>
<div style="left:1531px;top:544px;width:1px;height:25px;background:#f7b299"></div>
<div style="left:1594px;top:517px;width:1px;height:27px;background:#dde6ee"></div>
<div style="left:1594px;top:544px;width:1px;height:25px;background:#f7b299"></div>
<div style="left:301px;top:543px;width:1294px;height:1px;background:#e6ebf0"></div>
<div style="left:286px;top:543px;width:15px;height:1px;background:#c5d8e7"></div>
<svg style="left:291px;top:551px" width="8" height="12"><path d="M0.500 0L7 6L0.500 12Z" fill="#16315c"/></svg>
<span class="t" style="left:358.5px;top:497px;font-size:15px;transform:scaleX(1.033);color:#000;">Código</span>
<span class="t" style="left:472.9px;top:497px;font-size:15px;transform:scaleX(1.054);color:#000;">Descrição</span>
<span class="t" style="left:787.4px;top:497px;font-size:15px;transform:scaleX(1.06);color:#000;">Complemento</span>
<span class="t" style="left:924.5px;top:497px;font-size:15px;transform:scaleX(0.962);color:#000;">CFOP</span>
<span class="t" style="left:1035.9px;top:497px;font-size:15px;transform:scaleX(1.07);color:#000;">Quant.</span>
<span class="t" style="left:1091.9px;top:497px;font-size:15px;transform:scaleX(1.071);color:#000;">Un.</span>
<span class="t" style="left:1174.5px;top:497px;font-size:15px;transform:scaleX(1.103);color:#000;">Vr. Unitário</span>
<span class="t" style="left:1311px;top:497px;font-size:15px;transform:scaleX(1.17);color:#000;">Vr. Total</span>
<span class="t" style="left:1410.9px;top:497px;font-size:15px;transform:scaleX(1.081);color:#000;">Quant.</span>
<span class="t" style="left:1466.9px;top:497px;font-size:15px;transform:scaleX(1.071);color:#000;">Un.</span>
<span class="t" style="left:1535px;top:497px;font-size:15px;transform:scaleX(1.028);color:#000;">Estoque</span>
<span class="t" style="left:341px;top:523px;font-size:16px;font-weight:700;color:#000;">1</span>
<span class="t" style="left:359.3px;top:523px;font-size:16px;font-weight:700;transform:scaleX(1.162);color:#000;">5045</span>
<span class="t" style="left:474.5px;top:523px;font-size:15px;transform:scaleX(0.993);color:#000;">EXTENSÃO TOMADA</span>
<span class="t" style="left:1076px;top:523px;font-size:15px;color:#000;">2</span>
<span class="t" style="left:1093.5px;top:523px;font-size:15px;transform:scaleX(0.957);color:#000;">UNID</span>
<span class="t" style="left:1191.9px;top:523px;font-size:15px;transform:scaleX(1.068);color:#000;">R$ 34,50</span>
<span class="t" style="left:1309.9px;top:523px;font-size:15px;transform:scaleX(1.059);color:#000;">R$ 69,00</span>
<span class="t" style="left:1451px;top:523px;font-size:15px;color:#000;">2</span>
<span class="t" style="left:1468.5px;top:523px;font-size:15px;transform:scaleX(0.957);color:#000;">UNID</span>
<span class="t" style="left:1557.5px;top:523px;font-size:15px;color:#000;">N</span>
<span class="t" style="left:342px;top:549px;font-size:16px;font-weight:700;color:#fdeee6;">2</span>
<span class="t" style="left:359.3px;top:549px;font-size:16px;font-weight:700;transform:scaleX(1.162);color:#fdeee6;">5058</span>
<span class="t" style="left:474.5px;top:549px;font-size:15px;transform:scaleX(1.005);color:#fdeee6;">FILTRO DE LINHA 8 TOMADAS</span>
<span class="t" style="left:1076px;top:549px;font-size:15px;color:#fdeee6;">2</span>
<span class="t" style="left:1093.5px;top:549px;font-size:15px;transform:scaleX(0.957);color:#fdeee6;">UNID</span>
<span class="t" style="left:1191.9px;top:549px;font-size:15px;transform:scaleX(1.068);color:#fdeee6;">R$ 39,80</span>
<span class="t" style="left:1309.9px;top:549px;font-size:15px;transform:scaleX(1.059);color:#fdeee6;">R$ 79,60</span>
<span class="t" style="left:1451px;top:549px;font-size:15px;color:#fdeee6;">2</span>
<span class="t" style="left:1468.5px;top:549px;font-size:15px;transform:scaleX(0.957);color:#fdeee6;">UNID</span>
<span class="t" style="left:1557.5px;top:549px;font-size:15px;color:#fdeee6;">N</span>
<div style="left:1612px;top:491px;width:21px;height:244px;background:linear-gradient(90deg,#a7c1d7,#b5cbdd 50%,#c2d5e3)"></div>
<div style="left:1612px;top:492px;width:21px;height:20px;border:1px solid #a3c0d9;border-radius:3px;background:linear-gradient(90deg,#e6eef5,#cddde9)"><svg style="left:4px;top:6px" width="10" height="6"><path d="M0 5.500L5 0.500L10 5.500Z" fill="#4f7fae"/></svg></div>
<div style="left:1612px;top:581px;width:21px;height:132px;border:1px solid #a3c0d9;border-radius:3px;background:linear-gradient(90deg,#e6eef5,#cddde9)"><div style="left:6px;top:63px;width:7px;height:1px;background:#fff"></div><div style="left:6px;top:66px;width:7px;height:1px;background:#fff"></div></div>
<div style="left:1612px;top:715px;width:21px;height:19px;border:1px solid #a3c0d9;border-radius:3px;background:linear-gradient(90deg,#e6eef5,#cddde9)"><svg style="left:5px;top:7px" width="9" height="5"><path d="M0 0L4.500 4.500L9 0Z" fill="#2d5b8d"/></svg></div>
<div class="grp" style="left:285px;top:740px;width:735px;height:84px;"></div>
<span class="t" style="left:296px;top:754px;font-size:18px;transform:scaleX(1.011);color:#3f6b9c;">Observação</span>
<div class="fld" style="left:297px;top:775px;width:698px;height:30px;"></div>
<div class="grp" style="left:1023px;top:740px;width:411px;height:84px;"></div>
<span class="t" style="left:1033.5px;top:754px;font-size:18px;transform:scaleX(0.983);color:#3f6b9c;">Usuário</span>
<div class="fld ro" style="left:1035px;top:775px;width:373px;height:30px;"></div>
<span class="t" style="left:1037.6px;top:781px;font-size:18px;transform:scaleX(0.944);color:#6f6f6f;">carolina</span>
<div class="grp" style="left:1437px;top:740px;width:197px;height:84px;"></div>
<span class="t" style="left:1460.5px;top:754px;font-size:18px;transform:scaleX(1.039);color:#3f6b9c;">Valor Total Nota</span>
<div class="fld ro" style="left:1462px;top:775px;width:147px;height:30px;"></div>
<span class="t" style="left:1504.9px;top:780px;font-size:19px;font-weight:700;transform:scaleX(1.14);color:#76706f;">R$ 148,60</span>
<div style="left:275px;top:837px;width:1370px;height:72px;border:1px solid #a9c5dd;border-right:none;border-bottom:none;box-shadow:inset 1px 1px 0 rgba(255,255,255,.7)"></div>
<div class="nb" style="left:285px;top:850px;width:62px;height:49px;"><svg style="left:20px;top:14px" width="20" height="20" viewBox="0 0 20 20"><rect x="5" y="3" width="2" height="13" fill="#17325d"/><path d="M14.500 3V16L6.500 9.500Z" fill="#17325d"/></svg></div>
<div class="nb" style="left:348px;top:850px;width:62px;height:49px;"><svg style="left:20px;top:14px" width="20" height="20" viewBox="0 0 20 20"><path d="M12 4V15L6 9.500Z" fill="#17325d"/></svg></div>
<div class="nb" style="left:411px;top:850px;width:61px;height:49px;"><svg style="left:20px;top:14px" width="20" height="20" viewBox="0 0 20 20"><path d="M7 4V15L13 9.500Z" fill="#17325d"/></svg></div>
<div class="nb" style="left:473px;top:850px;width:62px;height:49px;"><svg style="left:20px;top:14px" width="20" height="20" viewBox="0 0 20 20"><rect x="12" y="3" width="2" height="13" fill="#17325d"/><path d="M4.500 3V16L12.500 9.500Z" fill="#17325d"/></svg></div>
<div class="nb" style="left:536px;top:850px;width:61px;height:49px;"><svg style="left:20px;top:14px" width="20" height="20" viewBox="0 0 20 20"><path d="M7.500 5.500A5.200 5.200 0 1 0 13.500 6" fill="none" stroke="#17325d" stroke-width="1.700"/><path d="M4.500 3.200L9.500 3.800L6.500 8Z" fill="#17325d"/></svg></div></div></body></html>
